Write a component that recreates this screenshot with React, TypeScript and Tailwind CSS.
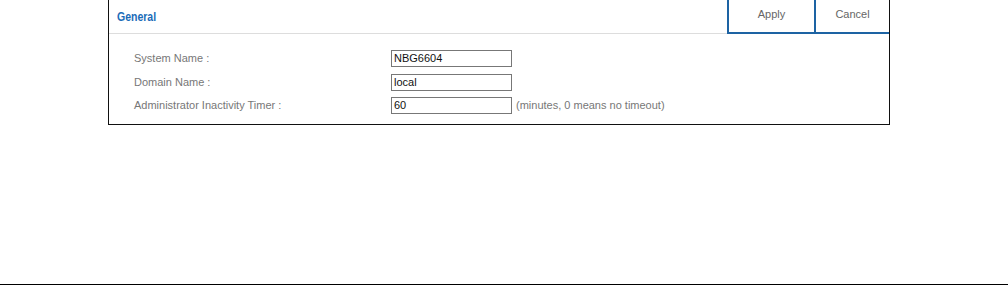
import React from 'react'

const rows = [
  { label: 'System Name :', value: 'NBG6604' },
  { label: 'Domain Name :', value: 'local' },
  { label: 'Administrator Inactivity Timer :', value: '60', hint: '(minutes, 0 means no timeout)' },
]

export default function App() {
  return (
    <div className="relative h-[285px] w-[1008px] bg-white" style={{ fontFamily: '"Liberation Sans", Arial, sans-serif' }}>
      <div className="ml-[108px] h-[125px] w-[782px] border-x border-b border-[#111] flex flex-col">
        <div className="flex h-[34px]">
          <div className="flex-1 border-b border-[#ddd] pl-[8px] pt-[9px] leading-[14px]">
            <span className="inline-block origin-left scale-x-[0.84] text-[12.5px] font-bold text-[#1b6cb8]">
              General
            </span>
          </div>
          <button className="w-[87px] border-l-2 border-b-2 border-[#1d63a3] text-[11px] text-[#666] pb-[3px]">Apply</button>
          <button className="w-[75px] border-l-2 border-b-2 border-[#1d63a3] text-[11px] text-[#666] pb-[3px]">Cancel</button>
        </div>
        <div className="flex flex-col gap-[6.5px] pt-[16px] pl-[25px]">
          {rows.map(r => (
            <div key={r.label} className="flex items-center h-[17px]">
              <div className="w-[257px] text-[11px] text-[#777]">{r.label}</div>
              <div className="w-[121px] h-[17px] border border-[#777] px-[2px] text-[11px] leading-[15px] text-[#111]">{r.value}</div>
              {r.hint && <div className="ml-[4px] text-[11px] text-[#777]">{r.hint}</div>}
            </div>
          ))}
        </div>
      </div>
      <div className="absolute left-0 right-0 top-[284px] h-px bg-black" />
    </div>
  )
}
